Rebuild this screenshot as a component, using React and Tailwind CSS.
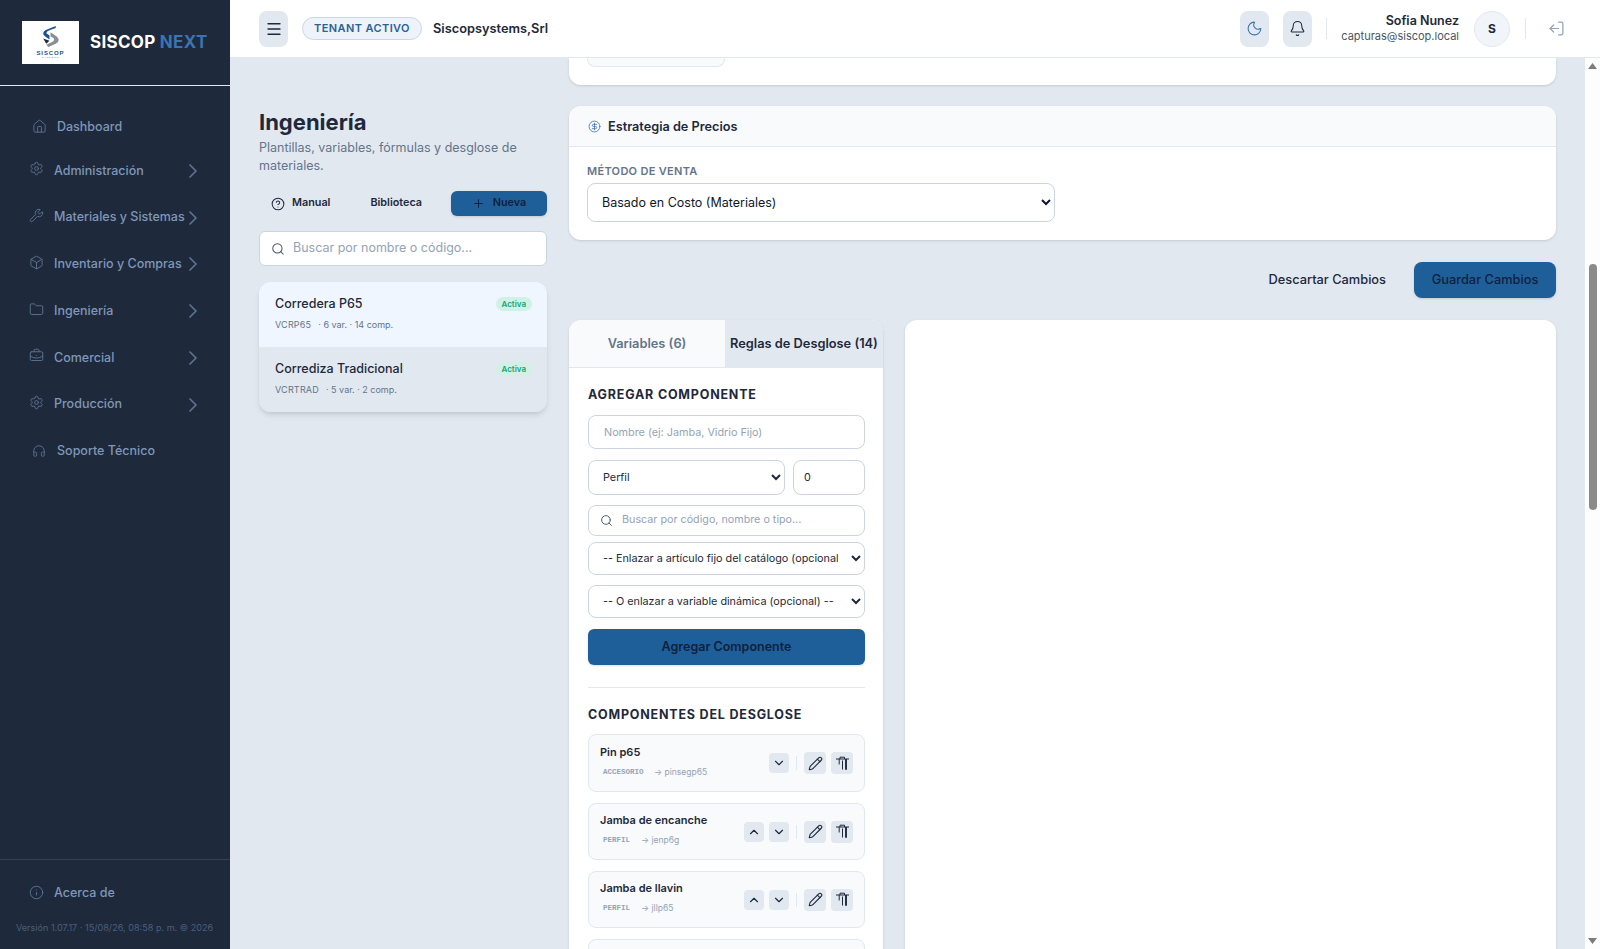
import React from 'react';
import {
  House, Settings, Wrench, Box, Folder, BriefcaseBusiness, Headphones, Info, ChevronRight, ChevronUp, ChevronDown,
  Menu, Moon, Bell, LogOut, CircleHelp, Plus, Search, CircleDollarSign, Pencil,
} from 'lucide-react';

const navItems = [
  { label: 'Administración', icon: Settings },
  { label: 'Materiales y Sistemas', icon: Wrench },
  { label: 'Inventario y Compras', icon: Box },
  { label: 'Ingeniería', icon: Folder },
  { label: 'Comercial', icon: BriefcaseBusiness },
  { label: 'Producción', icon: Settings },
];

const components = [
  { name: 'Pin p65', type: 'ACCESORIO', ref: 'pinsegp65', first: true },
  { name: 'Jamba de encanche', type: 'PERFIL', ref: 'jenp6g' },
  { name: 'Jamba de llavin', type: 'PERFIL', ref: 'jllp65' },
];

const TrashGlyph = () => (
  <svg width="15" height="15" viewBox="0 0 15 15" fill="none" stroke="#1e293b" strokeWidth="1">
    <path d="M1 3h13" />
    <path d="M5 3V1.2h4.5V3" />
    <path d="M4.2 3v5.5" />
    <path d="M7.5 4.5v9" />
    <path d="M11 3v10.8" strokeWidth="1.9" />
  </svg>
);

const Logo = () => (
  <div className="w-[57px] h-[43px] bg-white flex flex-col items-center justify-center shrink-0">
    <svg width="21" height="23" viewBox="0 0 20 22" fill="none">
      <path d="M15 0 L5 4 Q1 7 5 10 L9 13 L9 9 L6 7 Q6 5 9 4 L15 2 Z" fill="#1d4f9c" />
      <path d="M10 6 L16 10 Q20 14 15 17 L8 20 L6 18 L12 15 Q15 13 12 11 L10 10 Z" fill="#8a8f94" />
      <path d="M3 12 L9 14 L6 17 Z" fill="#1e293b" />
    </svg>
    <span className="mt-[1px] text-[6px] leading-[6px] font-bold text-[#1d4f9c] tracking-[0.9px] font-['Liberation_Sans',sans-serif]">SISCOP</span>
    <span className="text-[2.5px] leading-[3px] text-gray-500 tracking-[0.8px] font-['Liberation_Sans',sans-serif]">SYSTEMS</span>
  </div>
);

const Sidebar = () => (
  <aside className="w-[230px] shrink-0 h-full bg-[#1e293b] flex flex-col">
    <div className="h-[86px] shrink-0 border-b border-[#e2e8f0] pl-[22px] flex items-center gap-[11px]">
      <Logo />
      <span className="text-[17px] font-bold tracking-[0.3px] text-white">
        SISCOP <span className="text-[#3b74b0]">NEXT</span>
      </span>
    </div>

    <nav className="flex-1 pt-[21px] text-[12.5px] font-medium text-[#7f97b8]">
      <div className="h-[40.5px] flex items-center pl-[32px] gap-[10px]">
        <House className="w-[15px] h-[15px] text-[#5d7391] -mt-[2px]" strokeWidth={1.5} />
        <span>Dashboard</span>
      </div>
      {navItems.map((item) => (
        <div key={item.label} className="h-[46.75px] flex items-center pl-[29px]">
          <item.icon className="w-[15px] h-[15px] text-[#5d7391] -mt-[4px] shrink-0" strokeWidth={1.5} />
          <span className="ml-[10px] w-[132px] shrink-0 whitespace-nowrap">{item.label}</span>
          <ChevronRight className="w-6 h-6 -ml-[5px] text-[#5d7391] shrink-0" strokeWidth={1.75} />
        </div>
      ))}
      <div className="h-[46.75px] flex items-center pl-[32px] gap-[11px]">
        <Headphones className="w-[14px] h-[14px] text-[#5d7391]" strokeWidth={1.5} />
        <span>Soporte Técnico</span>
      </div>
    </nav>

    <div className="h-[90px] shrink-0 border-t border-[#334155] flex flex-col">
      <div className="flex items-center pl-[29px] gap-[10px] pt-[24px] text-[12.5px] font-medium text-[#7f97b8]">
        <Info className="w-[15px] h-[15px] text-[#5d7391] -mt-[2px]" strokeWidth={1.5} />
        <span>Acerca de</span>
      </div>
      <p className="mt-[19px] pl-[16px] text-[9.1px] leading-[12px] text-[#4b5f7d] whitespace-nowrap">
        Versión 1.07.17 · 15/08/26, 08:58 p. m. © 2026
      </p>
    </div>
  </aside>
);

const Header = () => (
  <header className="h-[58px] shrink-0 bg-white border-b border-[#e2e8f0] flex items-center pl-[29px] pr-[35px]">
    <button className="w-[29px] h-[36px] rounded-lg bg-[#e2e8f0] flex items-center justify-center text-[#1e293b]">
      <Menu className="w-[18px] h-[18px]" strokeWidth={1.75} />
    </button>
    <span className="ml-[14px] h-[23px] w-[120px] rounded-full bg-[#eef3f9] border border-[#c7d7e9] flex items-center justify-center text-[11px] font-semibold tracking-[0.4px] text-[#2b6199]">
      TENANT ACTIVO
    </span>
    <span className="ml-[11px] text-[12.8px] font-semibold text-[#1e293b]">Siscopsystems,Srl</span>

    <div className="ml-auto flex items-center">
      <button className="w-[29px] h-[36px] rounded-lg bg-[#e2e8f0] flex items-center justify-center text-[#3b74b0]">
        <Moon className="w-[17px] h-[17px]" strokeWidth={1.5} />
      </button>
      <button className="ml-[14px] w-[29px] h-[36px] rounded-lg bg-[#e2e8f0] flex items-center justify-center text-[#1e293b]">
        <Bell className="w-[17px] h-[17px]" strokeWidth={1.5} />
      </button>
      <span className="ml-[14px] w-px h-[21px] bg-[#e2e8f0]" />
      <div className="ml-[14px] w-[118px] text-right">
        <p className="text-[12.5px] leading-[16px] font-semibold text-[#1e293b]">Sofia Nunez</p>
        <p className="text-[11px] leading-[15px] text-[#475569]">capturas@siscop.local</p>
      </div>
      <span className="ml-[15px] w-[36px] h-[36px] rounded-full bg-[#f1f5f9] border border-[#e2e8f0] flex items-center justify-center text-[12px] font-bold text-[#1e293b]">
        S
      </span>
      <span className="ml-[15px] w-px h-[21px] bg-[#e2e8f0]" />
      <LogOut className="ml-[22px] w-[17px] h-[17px] text-[#94a3b8] rotate-180" strokeWidth={1.75} />
    </div>
  </header>
);

const Scrollbar = () => (
  <div className="w-[15px] shrink-0 bg-[#fdfdfd] flex flex-col items-center">
    <svg width="9" height="6" viewBox="0 0 9 6" className="mt-[5px]"><path d="M4.5 0 9 6H0Z" fill="#7c7c7c" /></svg>
    <div className="w-[8px] h-[246px] mt-[195px] rounded-full bg-[#8a8a8a]" />
    <svg width="9" height="6" viewBox="0 0 9 6" className="mt-auto mb-[5px]"><path d="M4.5 6 9 0H0Z" fill="#7c7c7c" /></svg>
  </div>
);

const ListItem = ({ name, code, meta, active }) => (
  <div className={`h-[65px] pl-[16px] pr-[15px] pt-[13px] ${active ? 'bg-[#eff6ff]' : 'bg-[#e2e8f0]'}`}>
    <div className="flex items-center justify-between">
      <span className="text-[12.5px] leading-[18px] font-medium text-[#1e293b]">{name}</span>
      <span className="h-[14px] px-[6px] rounded-full bg-[#d1f0e6] text-[8px] font-semibold text-[#10a674] flex items-center">Activa</span>
    </div>
    <p className="mt-[5px] text-[9px] leading-[14px] text-[#64748b]">
      <span className="tracking-[0.2px]">{code}</span>
      <span className="ml-[7px]">{meta}</span>
    </p>
  </div>
);

const LeftPanel = () => (
  <div className="w-[288px] shrink-0 pt-[48px]">
    <h1 className="text-[22px] leading-[32px] font-bold text-[#1e293b]">Ingeniería</h1>
    <p className="text-[12.5px] leading-[18px] text-[#64748b] mt-[1px]">Plantillas, variables, fórmulas y desglose de materiales.</p>
    <div className="mt-[16px] flex items-center h-[25px] text-[10.8px] font-semibold text-[#1e293b]">
      <CircleHelp className="ml-[12px] w-[14px] h-[14px]" strokeWidth={1.75} />
      <span className="ml-[7px]">Manual</span>
      <span className="ml-[40px]">Biblioteca</span>
      <button className="ml-auto w-[96px] h-[25px] rounded-md bg-[#1f5f99] shadow-sm flex items-center justify-center gap-[8px] text-[10.8px] font-semibold text-[#0f1f3d]">
        <Plus className="w-[13px] h-[13px]" strokeWidth={1.75} />
        Nueva
      </button>
    </div>
    <div className="mt-[15px] h-[35px] rounded-md bg-white border border-[#cbd5e1] flex items-center pl-[11px] gap-[8px]">
      <Search className="w-[14px] h-[14px] text-[#475569]" strokeWidth={1.75} />
      <input className="flex-1 min-w-0 bg-transparent outline-none text-[12.5px] placeholder:text-[#94a3b8]" placeholder="Buscar por nombre o código..." />
    </div>
    <div className="mt-[16px] rounded-xl overflow-hidden shadow-md">
      <ListItem active name="Corredera P65" code="VCRP65" meta="· 6 var. · 14 comp." />
      <ListItem name="Corrediza Tradicional" code="VCRTRAD" meta="· 5 var. · 2 comp." />
    </div>
  </div>
);

const fieldCls = 'rounded-lg bg-white border border-[#cbd5e1] text-[10.8px] text-[#1e293b] outline-none';

const ComponentCard = ({ name, type, ref: code, first }) => (
  <div className={`${first ? 'h-[58px]' : 'h-[57px]'} rounded-lg bg-[#f8fafc] border border-[#e2e8f0] px-[11px] flex items-center`}>
    <div className="flex-1 min-w-0 -mt-[4px]">
      <p className="text-[11px] leading-[16px] font-semibold text-[#1e293b]">{name}</p>
      <p className="mt-[5px] pl-[3px] flex items-center text-[8.5px] leading-[14px] text-[#94a3b8]">
        <span className="font-['Liberation_Mono',monospace] font-bold text-[7.5px] text-[#94a3b8] shrink-0" style={{ width: first ? 51 : 38 }}>{type}</span>
        <span>→ {code}</span>
      </p>
    </div>
    <div className="flex items-center text-[#1e293b]">
      {!first && (
        <button className="w-[20px] h-[20px] mr-[5px] rounded bg-[#e2e8f0] flex items-center justify-center">
          <ChevronUp className="w-[14px] h-[14px]" strokeWidth={2} />
        </button>
      )}
      <button className="w-[20px] h-[20px] rounded bg-[#e2e8f0] flex items-center justify-center">
        <ChevronDown className="w-[14px] h-[14px]" strokeWidth={2} />
      </button>
      <span className="mx-[7px] w-px h-[14px] bg-[#e2e8f0]" />
      <button className="w-[22px] h-[22px] rounded bg-[#e2e8f0] flex items-center justify-center">
        <Pencil className="w-[15px] h-[15px]" strokeWidth={1.75} />
      </button>
      <button className="ml-[5px] w-[22px] h-[22px] rounded bg-[#e2e8f0] flex items-center justify-center">
        <TrashGlyph />
      </button>
    </div>
  </div>
);

const RulesCard = () => (
  <div className="w-[314px] shrink-0 rounded-t-xl overflow-hidden shadow-sm bg-white">
    <div className="h-[48px] flex border-b border-[#e2e8f0] text-[12.8px] font-semibold">
      <div className="w-[156px] bg-[#f8fafc] text-[#64748b] flex items-center justify-center">Variables (6)</div>
      <div className="flex-1 bg-[#e2e8f0] text-[#1e293b] flex items-center justify-center whitespace-nowrap">Reglas de Desglose (14)</div>
    </div>
    <div className="pl-[19px] pr-[18px] pt-[19px]">
      <h3 className="text-[12.5px] leading-[16px] font-bold tracking-[0.8px] text-[#1e293b]">AGREGAR COMPONENTE</h3>
      <input className={`${fieldCls} mt-[12px] w-full h-[34px] px-[15px] placeholder:text-[#94a3b8]`} placeholder="Nombre (ej: Jamba, Vidrio Fijo)" />
      <div className="mt-[11px] flex gap-[8px]">
        <select className={`${fieldCls} flex-1 min-w-0 h-[35px] px-[10px]`} defaultValue="Perfil"><option>Perfil</option></select>
        <input className={`${fieldCls} w-[72px] h-[35px] px-[10px]`} defaultValue="0" />
      </div>
      <div className={`${fieldCls} mt-[10px] h-[31px] flex items-center pl-[11px] gap-[9px]`}>
        <Search className="w-[13px] h-[13px] text-[#475569]" strokeWidth={1.75} />
        <input className="flex-1 min-w-0 bg-transparent outline-none text-[10.75px] placeholder:text-[#94a3b8]" placeholder="Buscar por código, nombre o tipo..." />
      </div>
      <select className={`${fieldCls} mt-[6px] w-full h-[33px] px-[10px]`}><option>-- Enlazar a artículo fijo del catálogo (opcional) --</option></select>
      <select className={`${fieldCls} mt-[10px] w-full h-[33px] px-[10px]`}><option>-- O enlazar a variable dinámica (opcional) --</option></select>
      <button className="mt-[11px] w-full h-[36px] rounded-md bg-[#1f5f99] shadow-sm text-[12.5px] font-semibold text-[#0f1f3d]">Agregar Componente</button>
      <div className="mt-[22px] border-t border-[#e2e8f0]" />
      <h3 className="mt-[19px] text-[12.5px] leading-[16px] font-bold tracking-[0.8px] text-[#1e293b]">COMPONENTES DEL DESGLOSE</h3>
      <div className="mt-[11px] flex flex-col gap-[11px]">
        {components.map((c) => <ComponentCard key={c.name} {...c} />)}
        <div className="h-[57px] rounded-lg bg-[#f8fafc] border border-[#e2e8f0]" />
      </div>
    </div>
  </div>
);

const RightColumn = () => (
  <div className="flex-1 min-w-0 ml-[22px]">
    <div className="h-[27px] bg-white rounded-b-xl shadow-sm pl-[18px]">
      <div className="w-[138px] h-[9px] bg-[#f8fafc] border border-t-0 border-[#e2e8f0] rounded-b-lg" />
    </div>
    <section className="mt-[21px] h-[134px] bg-white rounded-xl shadow-sm overflow-hidden">
      <div className="h-[41px] bg-[#f8fafc] border-b border-[#e2e8f0] flex items-center pl-[19px] pt-[1px] gap-[7px]">
        <CircleDollarSign className="w-[13px] h-[13px] text-[#3b74b0]" strokeWidth={1.5} />
        <h2 className="text-[12.7px] font-semibold text-[#1e293b]">Estrategia de Precios</h2>
      </div>
      <div className="px-[18px] pt-[16px]">
        <label className="block text-[11px] leading-[16px] font-semibold tracking-[0.3px] text-[#64748b]">MÉTODO DE VENTA</label>
        <select className="mt-[4px] w-[468px] h-[39px] rounded-lg bg-white border border-[#cbd5e1] px-[10px] text-[12.5px] text-[#0f172a] outline-none">
          <option>Basado en Costo (Materiales)</option>
        </select>
      </div>
    </section>
    <div className="mt-[22px] h-[36px] flex items-center justify-end">
      <span className="text-[12.8px] font-medium text-[#1e293b]">Descartar Cambios</span>
      <button className="ml-[28px] w-[142px] h-[36px] rounded-lg bg-[#1f5f99] shadow-sm text-[12.8px] font-medium text-[#0f1f3d]">Guardar Cambios</button>
    </div>
    <div className="mt-[22px] flex gap-[22px] items-stretch h-[700px]">
      <RulesCard />
      <div className="flex-1 bg-white rounded-t-xl shadow-sm" />
    </div>
  </div>
);

export default function App() {
  return (
    <div className="flex w-full h-screen overflow-hidden bg-[#e2e8f0] font-['Inter',sans-serif]">
      <Sidebar />
      <div className="flex-1 min-w-0 flex flex-col">
        <Header />
        <div className="flex-1 min-h-0 flex">
          <main className="flex-1 min-w-0 overflow-hidden pl-[29px] pr-[29px] flex items-start">
            <LeftPanel />
            <RightColumn />
          </main>
          <Scrollbar />
        </div>
      </div>
    </div>
  );
}
